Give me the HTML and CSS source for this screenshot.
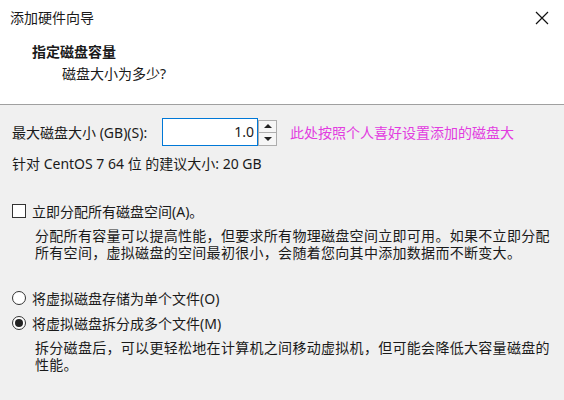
FILE: index.html
```html
<!DOCTYPE html>
<html>
  <head>
    <title>添加硬件向导</title>
    <link rel="stylesheet" href="styles.css">
  </head>
  <body>
    <div class="header">
      <div class="title-row">
        <span>添加硬件向导</span>
        <svg class="close" width="14" height="14" viewBox="0 0 14 14">
          <path d="M1 1L13 13M13 1L1 13" stroke="#111" stroke-width="1.2" fill="none" />
        </svg>
      </div>
      <div class="heading">指定磁盘容量</div>
      <div class="subheading">磁盘大小为多少?</div>
    </div>

    <div class="content">
      <div class="size-row">
        <label class="size-label">最大磁盘大小 (GB)(S):</label>
        <div class="spin-input">1.0</div>
        <div class="spinner">
          <div class="spin-btn"><span class="arrow-up"></span></div>
          <div class="spin-btn"><span class="arrow-down"></span></div>
        </div>
        <span class="note">此处按照个人喜好设置添加的磁盘大</span>
      </div>
      <div class="hint">针对 CentOS 7 64 位 的建议大小: 20 GB</div>

      <div class="option check-row">
        <span class="checkbox"></span>
        <span>立即分配所有磁盘空间(A)。</span>
      </div>
      <p class="desc">分配所有容量可以提高性能，但要求所有物理磁盘空间立即可用。如果不立即分配所有空间，虚拟磁盘的空间最初很小，会随着您向其中添加数据而不断变大。</p>

      <div class="option radio-first">
        <span class="radio"></span>
        <span>将虚拟磁盘存储为单个文件(O)</span>
      </div>
      <div class="option radio-second">
        <span class="radio checked"></span>
        <span>将虚拟磁盘拆分成多个文件(M)</span>
      </div>
      <p class="desc">拆分磁盘后，可以更轻松地在计算机之间移动虚拟机，但可能会降低大容量磁盘的性能。</p>
    </div>
  </body>
</html>
```

FILE: styles.css
```css
html,
body {
  height: 100%;
}
body {
  margin: 0;
  background-color: #f0f0f0;
  color: #1a1a1a;
  font-family: "Noto Sans", "Noto Sans CJK SC", sans-serif;
  font-size: 14px;
  overflow: hidden;
}
.header {
  height: 104px;
  background-color: #fff;
  border-bottom: 1px solid #a0a0a0;
}
.title-row {
  display: flex;
  justify-content: space-between;
  align-items: center;
  height: 20px;
  padding: 8px 15px 0 10px;
  line-height: 20px;
}
.heading {
  margin-top: 14px;
  padding-left: 32px;
  line-height: 20px;
  font-weight: bold;
}
.subheading {
  margin-top: 2px;
  padding-left: 62px;
  line-height: 20px;
}
.content {
  padding-left: 12px;
}
.size-row {
  display: flex;
  align-items: center;
  height: 28px;
  margin-top: 13px;
}
.size-label {
  width: 150px;
}
.spin-input {
  width: 96px;
  height: 28px;
  box-sizing: border-box;
  border: 1px solid #0078d7;
  background-color: #fff;
  text-align: right;
  padding-right: 3px;
  line-height: 26px;
}
.spinner {
  display: flex;
  flex-direction: column;
  width: 19px;
  height: 26px;
  margin-top: 1px;
}
.spin-btn {
  flex: 1;
  display: flex;
  align-items: center;
  justify-content: center;
  border: 1px solid #adadad;
  background-color: #f6f6f6;
}
.spin-btn + .spin-btn {
  border-top: none;
}
.arrow-up {
  border-left: 4px solid transparent;
  border-right: 4px solid transparent;
  border-bottom: 4px solid #222;
}
.arrow-down {
  border-left: 4px solid transparent;
  border-right: 4px solid transparent;
  border-top: 4px solid #222;
}
.note {
  margin-left: 13px;
  color: #e23ce0;
}
.hint {
  margin-top: 8px;
  line-height: 20px;
}
.option {
  display: flex;
  align-items: center;
  gap: 6px;
  height: 20px;
}
.check-row {
  margin-top: 27px;
}
.radio-first {
  margin-top: 27px;
}
.radio-second {
  margin-top: 5px;
}
.checkbox {
  width: 14px;
  height: 14px;
  box-sizing: border-box;
  border: 1px solid #333;
  background-color: #fff;
}
.radio {
  width: 14px;
  height: 14px;
  box-sizing: border-box;
  border: 1px solid #333;
  border-radius: 50%;
  background-color: #fff;
  display: flex;
  align-items: center;
  justify-content: center;
}
.radio.checked::after {
  content: "";
  width: 8px;
  height: 8px;
  border-radius: 50%;
  background-color: #222;
}
.desc {
  margin: 6px 0 0 23px;
  width: 520px;
  line-height: 17px;
  letter-spacing: 0.3px;
}
```
